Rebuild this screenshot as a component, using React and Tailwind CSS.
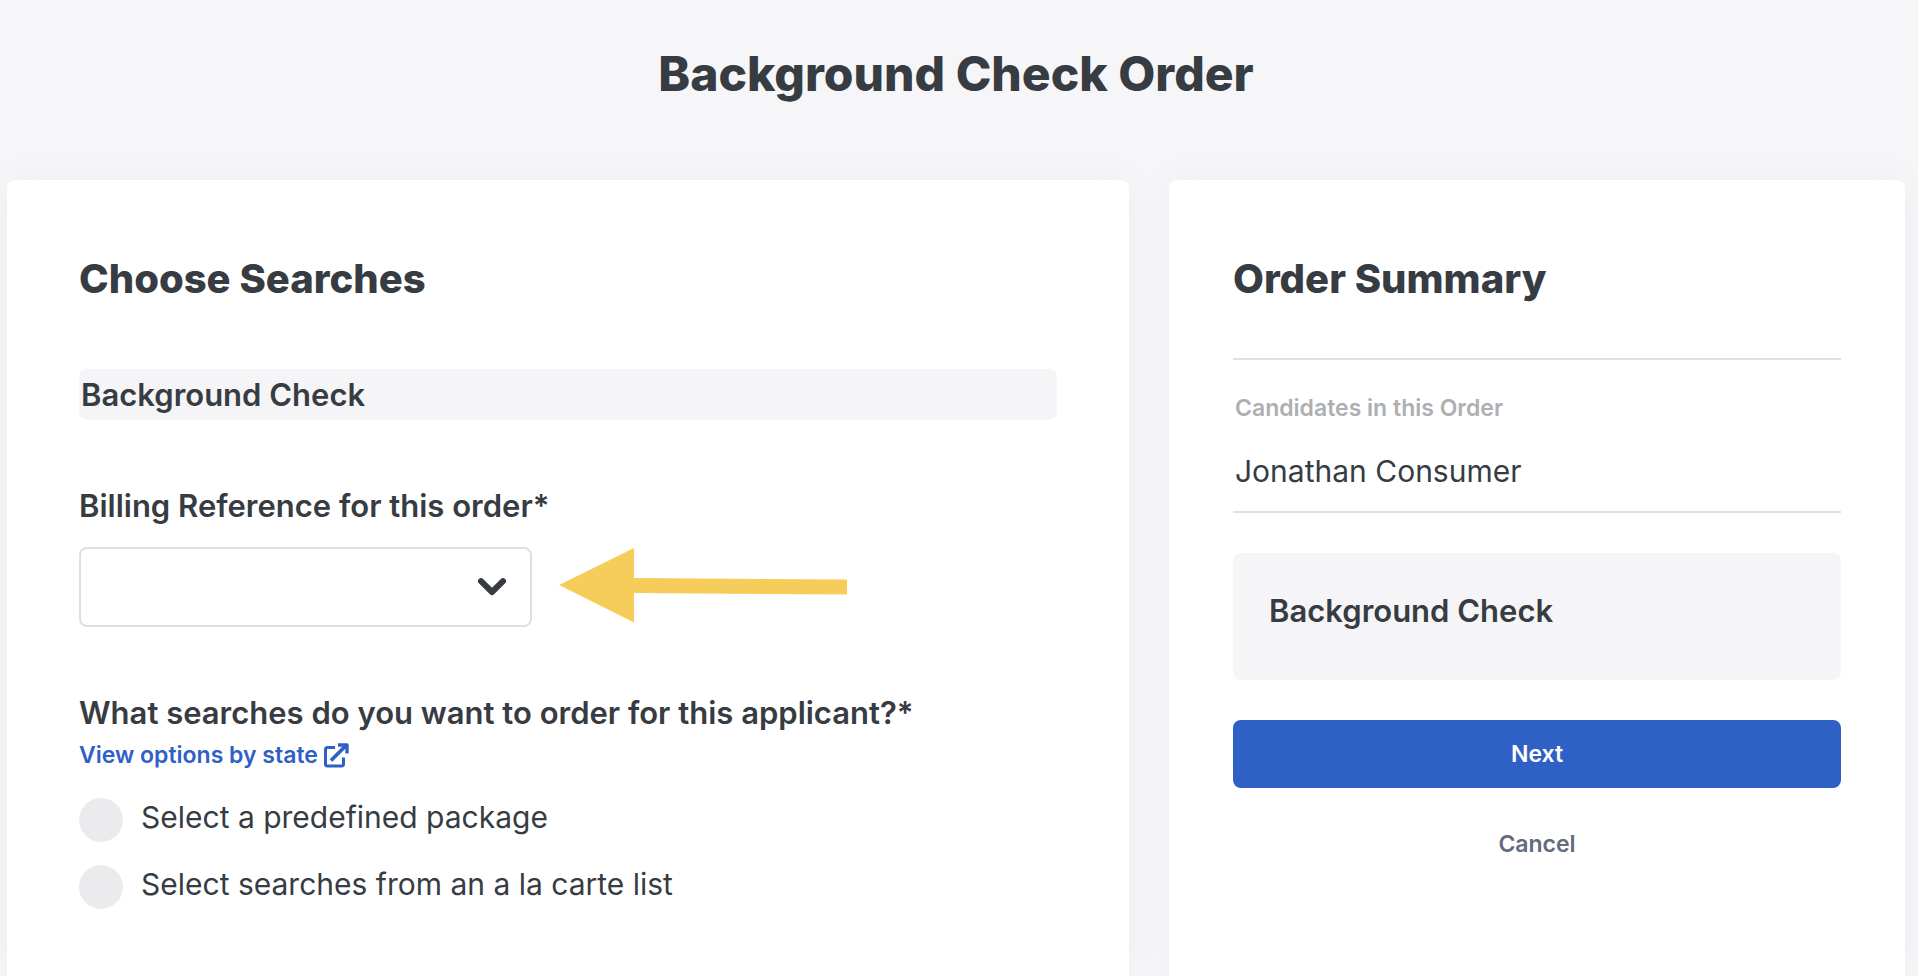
import React, { useState } from "react";

const searchOptions = [
  { id: "package", label: "Select a predefined package" },
  { id: "alacarte", label: "Select searches from an a la carte list" },
];

const ExternalLinkIcon = () => (
  <svg width="25" height="25" viewBox="0 0 25 25" fill="none" stroke="currentColor" strokeWidth="3" aria-hidden="true">
    <path d="M11 4.500H3.500A2 2 0 0 0 1.500 6.500V21A2 2 0 0 0 3.500 23H17.500A2 2 0 0 0 19.500 21V14.500" strokeLinejoin="round" />
    <path d="M7 17.500L22 2.500" strokeWidth="3.800" />
    <path d="M14 2H23V10.500" strokeWidth="3.400" strokeLinejoin="round" />
  </svg>
);

const ChevronIcon = () => (
  <svg
    className="pointer-events-none absolute right-[26px] top-[31px]"
    width="28"
    height="18"
    viewBox="0 0 28 18"
    fill="none"
    aria-hidden="true"
  >
    <path d="M3 3.200L14 14L25 3.200" stroke="currentColor" strokeWidth="6" strokeLinecap="round" strokeLinejoin="round" />
  </svg>
);

const Arrow = () => (
  <svg width="290" height="80" viewBox="0 0 290 80" fill="#f6cc5b" className="shrink-0" aria-hidden="true">
    <path d="M0 38L75 1V31L288 32.500V47.500L75 46V75.500Z" />
  </svg>
);

const ChooseSearches = () => {
  const [billing, setBilling] = useState("");
  const [option, setOption] = useState("");

  return (
    <section className="rounded-t-lg bg-white px-[72px] pt-[75px] shadow-[0_0_40px_rgba(50,60,120,0.04)]">
      <h2 className="text-[40px] font-extrabold leading-[48px]">Choose Searches</h2>

      <h3 className="mt-[66px] rounded-lg bg-[#f5f5f7] px-0.5 text-[31px] font-semibold leading-[51px]">
        Background Check
      </h3>

      <label htmlFor="billing" className="mt-[66px] block text-[31px] font-semibold leading-10">
        Billing Reference for this order*
      </label>
      <div className="mt-[21px] flex items-center gap-[27px]">
        <div className="relative w-[453px]">
          <select
            id="billing"
            value={billing}
            onChange={(e) => setBilling(e.target.value)}
            className="block h-20 w-full appearance-none rounded-lg border-2 border-[#dfdfe0] bg-white px-6 text-[30px]"
          >
            <option value=""></option>
          </select>
          <ChevronIcon />
        </div>
        <Arrow />
      </div>

      <fieldset className="mt-[66px]">
        <legend className="text-[31px] font-semibold leading-10">
          What searches do you want to order for this applicant?*
        </legend>
        <a href="#options" className="mt-[6px] flex items-center gap-[6px] text-[23px] font-semibold leading-8 text-[#2f60c6]">
          View options by state
          <ExternalLinkIcon />
        </a>
        <div className="mt-[27px] flex flex-col gap-[23px]">
          {searchOptions.map((item) => (
            <div key={item.id} className="flex h-11 items-start gap-[18px]">
              <input
                type="radio"
                id={item.id}
                name="search-option"
                checked={option === item.id}
                onChange={() => setOption(item.id)}
                className="size-11 shrink-0 appearance-none rounded-full bg-[#ebebed] checked:border-[12px] checked:border-[#2f60c6]"
              />
              <label htmlFor={item.id} className="text-[30px] leading-[38px]">
                {item.label}
              </label>
            </div>
          ))}
        </div>
      </fieldset>
    </section>
  );
};

const OrderSummary = () => (
  <aside className="rounded-t-lg bg-white px-16 pt-[75px] shadow-[0_0_40px_rgba(50,60,120,0.04)]">
    <h2 className="text-[40px] font-extrabold leading-[48px]">Order Summary</h2>

    <div className="mt-[55px] border-y-2 border-[#dfe0e0] px-0.5 pb-5 pt-8">
      <h3 className="text-[23px] font-semibold leading-8 text-[#aeafb2]">Candidates in this Order</h3>
      <p className="mt-[27px] text-[30px] leading-10">Jonathan Consumer</p>
    </div>

    <div className="mt-10 rounded-lg bg-[#f5f5f7] px-9 pb-[49px] pt-[38px]">
      <h3 className="text-[31px] font-semibold leading-10">Background Check</h3>
    </div>

    <button type="button" className="mt-10 block h-[68px] w-full rounded-lg bg-[#2f60c6] text-[23px] font-semibold leading-8 text-white">
      Next
    </button>
    <button type="button" className="mx-auto mt-10 block text-[23px] font-semibold leading-8 text-[#646b7c]">
      Cancel
    </button>
  </aside>
);

export default function App() {
  return (
    <div className="flex min-h-screen flex-col overflow-hidden bg-[#f6f6f8] pl-[7px] pr-[13px] font-['Inter',sans-serif] text-[#373c43]">
      <h1 className="pb-[76px] pt-11 text-center text-[48px] font-extrabold leading-[60px]">Background Check Order</h1>
      <main className="grid grow grid-cols-[1122fr_736fr] gap-10">
        <ChooseSearches />
        <OrderSummary />
      </main>
    </div>
  );
}
